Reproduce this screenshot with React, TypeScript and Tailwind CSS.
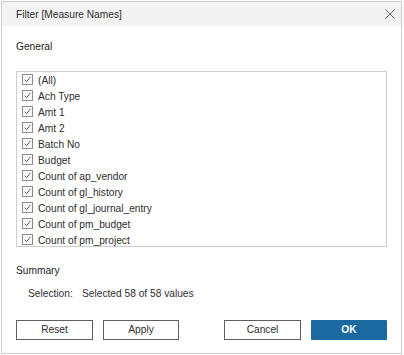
import React from 'react';

const items = [
    "(All)",
    "Ach Type",
    "Amt 1",
    "Amt 2",
    "Batch No",
    "Budget",
    "Count of ap_vendor",
    "Count of gl_history",
    "Count of gl_journal_entry",
    "Count of pm_budget",
    "Count of pm_project",
];

const CheckBox: React.FC = () => (
    <svg width="11" height="11" viewBox="0 0 11 11" className="shrink-0 mt-[2px]">
        <rect x="0.5" y="0.5" width="10" height="10" fill="white" stroke="#8c8c8c" />
        <path d="M2.6 5.6 L4.6 7.7 L8.4 2.8" fill="none" stroke="#555" strokeWidth="1" />
    </svg>
);

const App: React.FC = () => {
    return (
        <div className="w-[404px] h-[355px] bg-white pl-[1px] pt-[1px]" style={{ fontFamily: '"Liberation Sans", Arial, sans-serif' }}>
            <div className="w-[401px] h-[353px] border border-[#cdcdcd] bg-white flex flex-col text-[#2e2e2e]">
                {/* header */}
                <div className="h-[24px] bg-[#f3f3f3] flex items-center justify-between pl-[14px] pr-[6px]">
                    <span className="text-[10.2px] mt-[1px]">Filter [Measure Names]</span>
                    <svg width="10" height="10" viewBox="0 0 10 10">
                        <path d="M0.5 0.5 L9.5 9.5 M9.5 0.5 L0.5 9.5" stroke="#666" strokeWidth="1" />
                    </svg>
                </div>

                <div className="px-[14px] flex flex-col">
                    <div className="mt-[13px] text-[10.2px] leading-[16px] text-[#222]">General</div>

                    <div className="mt-[16px] h-[176px] border border-[#cdcdcd] overflow-hidden">
                        {items.map((item, i) => (
                            <div key={i} className="h-[16px] shrink-0 flex items-start gap-[5px] pl-[5px]">
                                <CheckBox />
                                <span className="text-[10.2px] leading-[15px] mt-[1px]">{item}</span>
                            </div>
                        ))}
                    </div>

                    <div className="mt-[16px] text-[10.2px] leading-[16px] text-[#222]">Summary</div>
                    <div className="mt-[7px] flex text-[10.2px] leading-[16px] pl-[12px]">
                        <span className="w-[54px]">Selection:</span>
                        <span>Selected 58 of 58 values</span>
                    </div>

                    <div className="mt-[18px] flex items-center">
                        <button className="w-[77px] h-[20px] border border-[#5f5f5f] text-[10.2px] text-[#2e2e2e] bg-white">Reset</button>
                        <button className="ml-[10px] w-[76px] h-[20px] border border-[#5f5f5f] text-[10.2px] text-[#2e2e2e] bg-white">Apply</button>
                        <div className="flex-1" />
                        <button className="w-[77px] h-[20px] border border-[#5f5f5f] text-[10.2px] text-[#2e2e2e] bg-white">Cancel</button>
                        <button className="ml-[10px] w-[76px] h-[20px] bg-[#1c69a2] text-[10.2px] font-bold text-white rounded-[1px]">OK</button>
                    </div>
                </div>
            </div>
        </div>
    );
};

export default App;
